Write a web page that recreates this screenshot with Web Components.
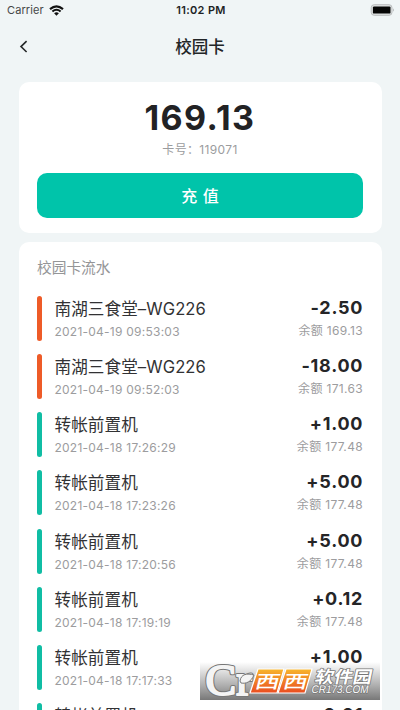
<!DOCTYPE html>
<html lang="zh-CN">
<head>
<meta charset="utf-8">
<title>校园卡</title>
<style>
html,body{margin:0;height:100%;overflow:hidden;background:#f0f5f6}
body{font-family:Inter,"Noto Sans CJK SC",sans-serif;color:#252527}
</style>
</head>
<body>
<campus-app></campus-app>
<script>
const define = (name, html, setup) => customElements.define(name, class extends HTMLElement {
  constructor() {
    super();
    this.attachShadow({mode: "open"}).innerHTML = html;
  }
  connectedCallback() { if (setup) setup(this, this.shadowRoot); }
});

define("status-bar", `
<style>
:host{display:grid;grid-template-columns:1fr auto 1fr;align-items:center;height:20px;padding:0 5px 0 7px;font-size:11px;line-height:20px;box-sizing:border-box}
.left{display:flex;align-items:center;gap:5px;color:#454748;letter-spacing:.1px}
.time{font-weight:600;color:#202224;font-size:11px;letter-spacing:.35px}
.battery{justify-self:end}
svg{display:block}
</style>
<div class="left"><span>Carrier</span>
<svg width="15" height="11" viewBox="0 0 15 11" fill="none" stroke="#111" stroke-width="2.1"><path d="M1 4.1Q7.5-1.5 14 4.1M3.4 6.5Q7.5 3 11.6 6.5"/><path d="M5.1 8.2Q7.5 6.2 9.9 8.2L7.5 10.7Z" fill="#111" stroke="none"/></svg></div>
<span class="time">11:02 PM</span>
<svg class="battery" width="25" height="12" viewBox="0 0 25 12"><rect x="1.2" y=".7" width="20.8" height="10.6" rx="3" fill="#dfe2e2" stroke="#b9bcbd"/><rect x="2.9" y="2.4" width="17.6" height="7.2" rx="1.2" fill="#050505"/><path d="M23 4.2Q24.7 6 23 7.8Z" fill="#a5a9aa"/></svg>`);

define("nav-bar", `
<style>
:host{display:grid;grid-template-columns:1fr auto 1fr;align-items:center;height:53px;padding:0 19px;box-sizing:border-box}
h1{margin:0;font-size:16.5px;font-weight:500;line-height:24px;color:#222527}
svg{display:block}
</style>
<svg width="10" height="14" viewBox="0 0 10 14" fill="none" stroke="#252829" stroke-width="1.6"><path d="M7.6 1.2 2 6.6l5.6 5.4"/></svg>
<h1><slot></slot></h1>`);

define("surface-card", `
<style>:host{display:block;background:#fff;border-radius:10px;margin:0 18.5px;padding:0 18.5px;box-sizing:border-box}</style>
<slot></slot>`);

define("balance-panel", `
<style>
:host{display:flex;flex-direction:column;align-items:center;height:150.5px}
.amount{font-size:34px;line-height:40px;font-weight:700;letter-spacing:1.35px;margin-top:16px;color:#222224}
.number{font-size:12px;line-height:18px;color:#9b9c9e;margin-top:3px;letter-spacing:.35px}
button{all:unset;display:block;align-self:stretch;height:45.5px;line-height:46px;border-radius:10px;background:#00c4aa;color:#fff;text-align:center;font-size:16px;font-weight:500;margin-top:13.5px;word-spacing:1px}
</style>
<div class="amount">169.13</div>
<div class="number">卡号：119071</div>
<button>充 值</button>`);

define("record-row", `
<style>
:host{display:grid;grid-template-columns:5px 1fr auto;column-gap:12.5px;height:44px;color:#323234}
.bar{border-radius:2.5px;background:var(--bar,#10bda4)}
.name{font-size:16.6px;line-height:26px;letter-spacing:.08px}
.time,.rest{font-size:12px;line-height:18px;color:#9c9c9e}
.time{letter-spacing:.24px;margin-top:1px}
.value{text-align:right}
.sum{font-size:18px;line-height:24px;font-weight:700;letter-spacing:.75px;margin-right:-.2px;color:#252527}
.rest{margin-top:2px;letter-spacing:.33px}
</style>
<i class="bar"></i>
<div><div class="name"></div><div class="time"></div></div>
<div class="value"><div class="sum"></div><div class="rest"></div></div>`,
(el, root) => {
  for (const key of ["name", "time", "sum", "rest"])
    root.querySelector("." + key).textContent = el.getAttribute(key);
  if (el.getAttribute("sum").startsWith("-")) el.style.setProperty("--bar", "#ee5b28");
});

define("record-list", `
<style>
:host{display:block;height:500px}
h2{margin:0;padding-top:15px;font-size:14.7px;font-weight:400;line-height:22px;color:#949597}
.rows{display:flex;flex-direction:column;gap:14.25px;margin-top:16.7px}
</style>
<h2>校园卡流水</h2><div class="rows"></div>`,
(el, root) => {
  const rows = [
    ["南湖三食堂–WG226", "2021-04-19 09:53:03", "-2.50", "169.13"],
    ["南湖三食堂–WG226", "2021-04-19 09:52:03", "-18.00", "171.63"],
    ["转帐前置机", "2021-04-18 17:26:29", "+1.00", "177.48"],
    ["转帐前置机", "2021-04-18 17:23:26", "+5.00", "177.48"],
    ["转帐前置机", "2021-04-18 17:20:56", "+5.00", "177.48"],
    ["转帐前置机", "2021-04-18 17:19:19", "+0.12", "177.48"],
    ["转帐前置机", "2021-04-18 17:17:33", "+1.00", ""],
    ["转帐前置机", "", "+0.01", ""]
  ];
  for (const [name, time, sum, rest] of rows) {
    const row = document.createElement("record-row");
    row.setAttribute("name", name);
    row.setAttribute("time", time);
    row.setAttribute("sum", sum);
    row.setAttribute("rest", rest && "余额 " + rest);
    root.querySelector(".rows").append(row);
  }
});

define("site-mark", `
<style>:host{display:block;width:180px;height:38px}svg{display:block;overflow:visible}</style>
<svg width="180" height="38" viewBox="0 0 180 38">
<defs>
<linearGradient id="band" x2="0" y2="1"><stop stop-color="#777" stop-opacity="0"/><stop offset="1" stop-color="#6c6c6c" stop-opacity=".92"/></linearGradient>
<linearGradient id="orange" x2="0" y2="1"><stop stop-color="#f8b62c"/><stop offset="1" stop-color="#e94c20"/></linearGradient>
</defs>
<rect width="180" height="38" fill="url(#band)"/>
<g font-family="Liberation Serif,serif" fill="#f4f4f4" stroke-linejoin="round">
<text x="5.5" y="32.5" font-size="44" textLength="46" lengthAdjust="spacingAndGlyphs" stroke="#777" stroke-width="4" paint-order="stroke">Cr</text>
<text x="5.5" y="32.5" font-size="44" textLength="46" lengthAdjust="spacingAndGlyphs" stroke="#f4f4f4" stroke-width="2" aria-hidden="true">Cr</text>
<path d="M40 19C41 12 47 11 54 13C51 20 46 22 41 21Z" stroke="#777" stroke-width="1"/>
</g>
<g fill="url(#orange)" stroke="#fff" stroke-width="1.2"><path d="M58 7H84L77 31H50Z"/><path d="M86 7H112L105 31H78Z"/></g>
<g fill="#fff" font-family="Noto Sans CJK SC,sans-serif" font-weight="500" font-size="18">
<text transform="translate(54 25.8) skewX(-14) scale(1.36 1)">西</text>
<text transform="translate(82 25.8) skewX(-14) scale(1.36 1)">西</text>
</g>
<g fill="#fff" stroke="#777" stroke-width="1.5" paint-order="stroke" stroke-linejoin="round">
<text transform="translate(114 20.5) skewX(-12)" font-family="Noto Sans CJK SC,sans-serif" font-size="17" font-weight="700" textLength="57" lengthAdjust="spacingAndGlyphs">软件园</text>
<text transform="translate(111 31.3) skewX(-10)" font-family="Liberation Sans,sans-serif" font-size="11" textLength="57" lengthAdjust="spacingAndGlyphs">CR173.COM</text>
</g>
</svg>`);

define("campus-app", `
<style>
:host{display:block;position:relative;width:400px;height:710px;overflow:hidden;background:#f0f5f6}
surface-card + surface-card{margin-top:9.5px}
nav-bar{margin-bottom:9px}
site-mark{position:absolute;left:200px;top:662px}
</style>
<status-bar></status-bar>
<nav-bar>校园卡</nav-bar>
<surface-card><balance-panel></balance-panel></surface-card>
<surface-card><record-list></record-list></surface-card>
<site-mark></site-mark>`);
</script>
</body>
</html>
